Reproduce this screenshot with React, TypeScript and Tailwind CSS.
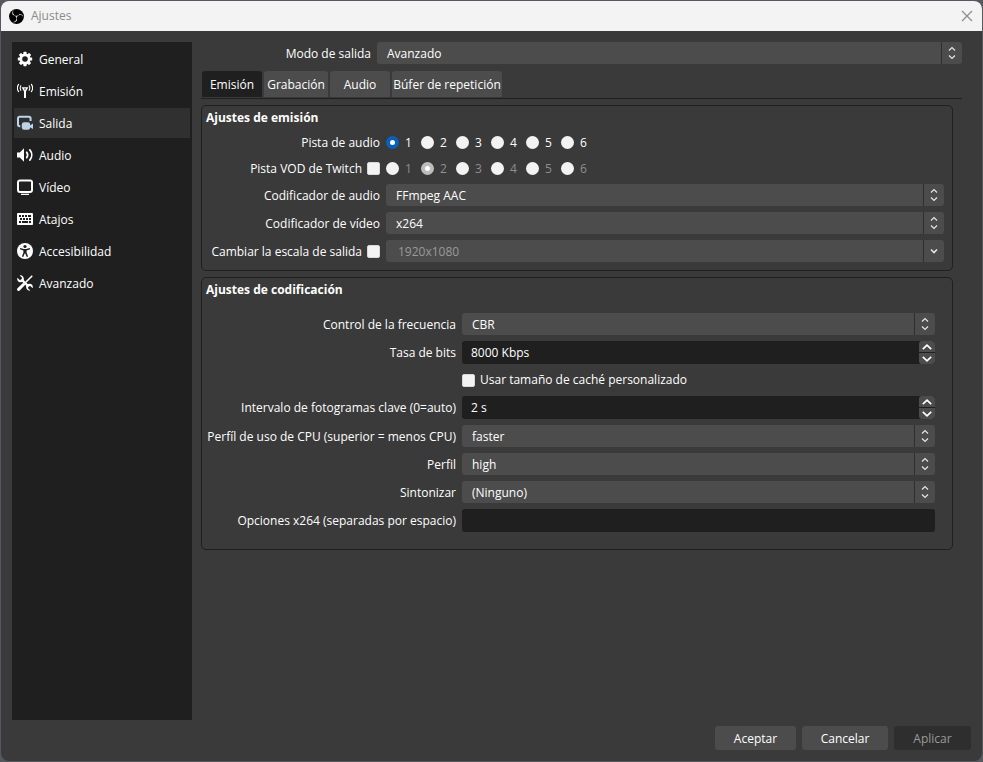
import { useId, useState } from "react";
import type { ReactNode } from "react";
import { SiObsstudio } from "react-icons/si";

const sections = [
  "General",
  "Emisión",
  "Salida",
  "Audio",
  "Vídeo",
  "Atajos",
  "Accesibilidad",
  "Avanzado",
];

const tabs = [
  { name: "Emisión", width: "w-[60px]" },
  { name: "Grabación", width: "w-[64px]" },
  { name: "Audio", width: "w-[60px]" },
  { name: "Búfer de repetición", width: "w-[110px]" },
];

const tracks = [1, 2, 3, 4, 5, 6];

// the glyph's outer ring is cropped off by the round black disc
function ObsLogo() {
  return (
    <span className="flex h-[15px] w-[15px] shrink-0 items-center justify-center overflow-hidden rounded-full bg-black">
      <SiObsstudio className="h-[17px] w-[17px] shrink-0 text-[#e2e2e2]" aria-hidden="true" />
    </span>
  );
}

function SectionIcon({ name }: { name: string }) {
  return (
    <svg
      viewBox="0 0 16 16"
      className="h-4 w-4 shrink-0"
      fill="#fff"
      aria-hidden="true"
    >
      {name === "General" && (
        <>
          {[0, 45, 90, 135].map((angle) => (
            <rect
              key={angle}
              x="6.4"
              y="0.8"
              width="3.2"
              height="14.4"
              rx="0.6"
              transform={`rotate(${angle} 8 8)`}
            />
          ))}
          <circle cx="8" cy="8" r="5.6" />
          <circle cx="8" cy="8" r="2.8" fill="#1f1f1f" />
        </>
      )}
      {name === "Emisión" && (
        <>
          <path d="M4.600 4.200h6.800L9 8.400V15H7V8.400zM7 5.600l1 1.700 1-1.700z" fillRule="evenodd" />
          <g fill="none" stroke="#fff" strokeWidth="1.100" strokeLinecap="round">
            <path d="M1.600 1.400c-1.500 2.200-1.500 5 0 7.200" />
            <path d="M3.800 2.800C2.900 4.200 2.900 5.900 3.800 7.300" />
            <path d="M14.400 1.400c1.500 2.200 1.500 5 0 7.200" />
            <path d="M12.200 2.800c.9 1.400.9 3.100 0 4.500" />
          </g>
        </>
      )}
      {name === "Salida" && (
        <>
          <path
            d="M3.300 11.200H2.600A1.600 1.600 0 0 1 1 9.600V3.400A1.600 1.600 0 0 1 2.600 1.800h9.400A1.600 1.600 0 0 1 13.600 3.400V6"
            fill="none"
            stroke="#bcd3e8"
            strokeWidth="2"
          />
          <rect x="4.800" y="7.300" width="8.400" height="7.500" rx="2.400" fill="#bcd3e8" />
          <path d="M12.500 10.700 16 8.600v5.300l-3.500-2z" fill="#bcd3e8" />
        </>
      )}
      {name === "Audio" && (
        <>
          <path d="M0 5.400h2.800L7 1.300v13.400l-4.200-4.100H0z" />
          <g fill="none" stroke="#fff" strokeWidth="1.700" strokeLinecap="round">
            <path d="M9.700 5.300c1.200 1.700 1.200 3.700 0 5.400" />
            <path d="M12.800 2.900c2.600 3 2.600 7.200 0 10.200" />
          </g>
        </>
      )}
      {name === "Vídeo" && (
        <>
          <rect
            x="1"
            y="1.500"
            width="14"
            height="11.500"
            rx="2"
            fill="none"
            stroke="#fff"
            strokeWidth="2"
          />
          <rect x="4" y="14.700" width="8" height="1.300" />
        </>
      )}
      {name === "Atajos" && (
        <>
          <rect x="0" y="2" width="16" height="12" rx="0.8" />
          <g fill="#1f1f1f">
            <path d="M2 4h2v2H2zM5 4h2v2H5zM8 4h2v2H8zM11 4h3v2h-3z" />
            <path d="M3 7h2v2H3zM6 7h2v2H6zM9 7h2v2H9zM12 7h2v2h-2z" />
            <path d="M2 10h2v2H2zM5 10h6v2H5zM12 10h2v2h-2z" />
          </g>
        </>
      )}
      {name === "Accesibilidad" && (
        <>
          <circle cx="8" cy="8" r="8" />
          <g fill="#1f1f1f">
            <circle cx="8" cy="3.500" r="1.600" />
            <path d="M3.200 5.100 6.800 5.900h2.400l3.600-.8.300 1.200-3.500 1.100v2.200l1.500 4-1.300.5L8.300 10.600h-.6L6.200 14.100l-1.300-.5 1.500-4V7.400L2.900 6.300z" />
          </g>
        </>
      )}
      {name === "Avanzado" && (
        <>
          <path
            d="M4.500 4.500 11.500 11.500"
            stroke="#fff"
            strokeWidth="2.400"
          />
          <path d="M2.700.4 5 2.700 4.600 4.600 2.700 5 .4 2.700C-.2 4.700.6 6.300 2.100 6.900c1.900.8 3.900 0 4.700-1.800C7.400 2.700 5.500-.2 2.700.4z" />
          <path d="m13.300 15.600-2.300-2.300.4-1.900 1.900-.4 2.300 2.300c.6-2-.2-3.600-1.700-4.200-1.900-.8-3.900 0-4.700 1.800-.6 2.400 1.300 5.300 4.100 4.700z" />
          <path
            d="M14.800 1.200 9 7"
            stroke="#fff"
            strokeWidth="1.600"
            strokeLinecap="round"
          />
          <path d="M6.500 9.500 1.600 14.400" stroke="#fff" strokeWidth="3" strokeLinecap="round" />
        </>
      )}
    </svg>
  );
}

interface SelectProps {
  id: string;
  value: string;
  disabled?: boolean;
}

function Select({ id, value, disabled }: SelectProps) {
  return (
    <div className="relative min-w-0 flex-1">
      <select
        id={id}
        disabled={disabled}
        className={`block h-[22px] w-full appearance-none rounded-[3px] bg-[#4c4c4c] pt-px pr-6 ${
          disabled ? "pl-3 text-[#9a9a9a]" : "pl-[10px] text-white"
        }`}
      >
        <option>{value}</option>
      </select>
      <span className="pointer-events-none absolute inset-y-0 right-0 flex w-[21px] items-center justify-center border-l border-[#2f2f2f]">
        <svg
          viewBox="0 0 10 14"
          className="h-[14px] w-[10px]"
          fill="none"
          stroke="#e6e6e6"
          strokeWidth={disabled ? 1.6 : 1.2}
          aria-hidden="true"
        >
          {disabled ? (
            <path d="m2 5.500 3 3 3-3" />
          ) : (
            <path d="m2 4.500 3-3 3 3M2 9.500l3 3 3-3" />
          )}
        </svg>
      </span>
    </div>
  );
}

function SpinBox({ id, value }: { id: string; value: string }) {
  return (
    <div className="flex h-[23px] min-w-0 flex-1 overflow-hidden rounded-[3px] bg-[#1f1f1f]">
      <input
        id={id}
        defaultValue={value}
        className="min-w-0 flex-1 bg-transparent pl-[9px] text-white outline-none"
      />
      <div className="flex w-4 flex-col gap-px">
        <button
          type="button"
          aria-label="Aumentar"
          className="flex flex-1 items-center justify-center rounded-t-[3px] bg-[#4c4c4c]"
        >
          <svg viewBox="0 0 10 6" className="h-[6px] w-[10px]" fill="none" stroke="#fff" strokeWidth="1.700">
            <path d="m.8 5.200 4.200-4 4.200 4" />
          </svg>
        </button>
        <button
          type="button"
          aria-label="Disminuir"
          className="flex flex-1 items-center justify-center rounded-b-[3px] bg-[#4c4c4c]"
        >
          <svg viewBox="0 0 10 6" className="h-[6px] w-[10px]" fill="none" stroke="#fff" strokeWidth="1.700">
            <path d="m.8.8 4.200 4 4.200-4" />
          </svg>
        </button>
      </div>
    </div>
  );
}

const checkboxClass =
  "block h-[13px] w-[13px] shrink-0 appearance-none rounded-[2px] border border-[#d8d8d8] bg-[#f3f3f3] checked:bg-[#0a5fb8]";

interface TrackRadiosProps {
  name: string;
  selected: number;
  disabled?: boolean;
}

function TrackRadios({ name, selected, disabled }: TrackRadiosProps) {
  return (
    <div className="flex" role="radiogroup" aria-label={name}>
      {tracks.map((track) => (
        <label
          key={track}
          className={`flex w-[35px] items-center gap-[6px] ${disabled ? "text-[#8f8f8f]" : ""}`}
        >
          <input
            type="radio"
            name={name}
            defaultChecked={track === selected}
            disabled={disabled}
            className="h-[13px] w-[13px] appearance-none rounded-full bg-[#f3f3f3] checked:border-4 checked:border-[#0a5fb8] checked:bg-white disabled:checked:border-[#bdbdbd]"
          />
          {track}
        </label>
      ))}
    </div>
  );
}

interface RowProps {
  label?: string;
  htmlFor?: string;
  labelWidth: string;
  checkbox?: boolean;
  children: ReactNode;
}

function Row({ label, htmlFor, labelWidth, checkbox, children }: RowProps) {
  const checkId = useId();
  return (
    <div className="flex items-center gap-[6px]">
      <div
        className={`flex shrink-0 items-center justify-end gap-[5px] whitespace-nowrap ${labelWidth}`}
      >
        {label && (
          <label htmlFor={checkbox ? checkId : htmlFor} className="pt-px">
            {label}
          </label>
        )}
        {checkbox && <input id={checkId} type="checkbox" className={checkboxClass} />}
      </div>
      {children}
    </div>
  );
}

const streamLabel = "w-[178px]";
const encoderLabel = "w-[254px]";

export default function App() {
  const [section, setSection] = useState("Salida");
  const [tab, setTab] = useState("Emisión");

  return (
    <div className="flex min-h-screen bg-[#55585c] p-px font-[family-name:'Open_Sans',sans-serif] text-[12px] leading-4 text-white">
      <div className="flex min-w-0 flex-1 flex-col overflow-hidden rounded-lg bg-[#3a3a3a]">
        <header className="flex h-[30px] items-center gap-[7px] bg-[#f3f3f3] pr-[9px] pl-2 text-[#8b8b8b]">
          <ObsLogo />
          <h1 className="flex-1">Ajustes</h1>
          <button type="button" aria-label="Cerrar">
            <svg viewBox="0 0 12 12" className="h-3 w-3" stroke="#8b8b8b" strokeWidth="1.200">
              <path d="m1 1 10 10M11 1 1 11" />
            </svg>
          </button>
        </header>

        <div className="flex flex-1 flex-col gap-[6px] p-[11px]">
          <div className="flex flex-1 gap-[9px]">
            <nav className="flex w-[180px] shrink-0 flex-col gap-[2px] bg-[#1f1f1f] p-[2px]">
              {sections.map((name) => (
                <button
                  type="button"
                  key={name}
                  onClick={() => setSection(name)}
                  className={`flex h-[30px] items-center gap-[6px] pl-[3px] text-left ${
                    section === name ? "bg-[#303030]" : ""
                  }`}
                >
                  <SectionIcon name={name} />
                  <span className="pt-[2px]">{name}</span>
                </button>
              ))}
            </nav>

            <main className="flex min-w-0 flex-1 flex-col pr-[9px]">
              <div className="pl-px">
                <Row label="Modo de salida" htmlFor="mode" labelWidth="w-[169px]">
                  <Select id="mode" value="Avanzado" />
                </Row>
              </div>

              <div
                role="tablist"
                className="mt-[7px] flex gap-[2px] border-b border-[#1f1f1f] pb-px pl-px"
              >
                {tabs.map(({ name, width }) => (
                  <button
                    type="button"
                    role="tab"
                    key={name}
                    aria-selected={tab === name}
                    onClick={() => setTab(name)}
                    className={`h-[26px] rounded-t-[3px] pt-px whitespace-nowrap ${width} ${
                      tab === name ? "bg-[#1f1f1f]" : "bg-[#4c4c4c]"
                    }`}
                  >
                    {name}
                  </button>
                ))}
              </div>

              <section className="mt-[6px] mr-[9px] rounded-[5px] border border-[#1f1f1f] pt-1 pr-2 pb-2">
                <h2 className="pl-1 font-bold">Ajustes de emisión</h2>
                <div className="mt-2 flex flex-col gap-[6px]">
                  <Row label="Pista de audio" labelWidth={streamLabel}>
                    <TrackRadios name="Pista de audio" selected={1} />
                  </Row>
                  <div className="pt-[3px] pb-px">
                    <Row label="Pista VOD de Twitch" labelWidth={streamLabel} checkbox>
                      <TrackRadios name="Pista VOD de Twitch" selected={2} disabled />
                    </Row>
                  </div>
                  <Row label="Codificador de audio" htmlFor="aenc" labelWidth={streamLabel}>
                    <Select id="aenc" value="FFmpeg AAC" />
                  </Row>
                  <Row label="Codificador de vídeo" htmlFor="venc" labelWidth={streamLabel}>
                    <Select id="venc" value="x264" />
                  </Row>
                  <Row label="Cambiar la escala de salida" labelWidth={streamLabel} checkbox>
                    <Select id="scale" value="1920x1080" disabled />
                  </Row>
                </div>
              </section>

              <section className="mt-[6px] mr-[9px] rounded-[5px] border border-[#1f1f1f] pt-1 pr-[17px] pb-[17px]">
                <h2 className="pl-1 font-bold">Ajustes de codificación</h2>
                <div className="mt-[15px] flex flex-col gap-[6px]">
                  <Row label="Control de la frecuencia" htmlFor="rate" labelWidth={encoderLabel}>
                    <Select id="rate" value="CBR" />
                  </Row>
                  <Row label="Tasa de bits" htmlFor="bitrate" labelWidth={encoderLabel}>
                    <SpinBox id="bitrate" value="8000 Kbps" />
                  </Row>
                  <div className="py-[2px]">
                    <Row labelWidth={encoderLabel}>
                      <label className="flex items-center gap-[5px]">
                        <input type="checkbox" className={checkboxClass} />
                        Usar tamaño de caché personalizado
                      </label>
                    </Row>
                  </div>
                  <Row
                    label="Intervalo de fotogramas clave (0=auto)"
                    htmlFor="keyint"
                    labelWidth={encoderLabel}
                  >
                    <SpinBox id="keyint" value="2 s" />
                  </Row>
                  <Row
                    label="Perfíl de uso de CPU (superior = menos CPU)"
                    htmlFor="preset"
                    labelWidth={encoderLabel}
                  >
                    <Select id="preset" value="faster" />
                  </Row>
                  <Row label="Perfil" htmlFor="profile" labelWidth={encoderLabel}>
                    <Select id="profile" value="high" />
                  </Row>
                  <Row label="Sintonizar" htmlFor="tune" labelWidth={encoderLabel}>
                    <Select id="tune" value="(Ninguno)" />
                  </Row>
                  <Row
                    label="Opciones x264 (separadas por espacio)"
                    htmlFor="opts"
                    labelWidth={encoderLabel}
                  >
                    <input
                      id="opts"
                      className="h-[23px] min-w-0 flex-1 rounded-[3px] bg-[#1f1f1f] px-2 outline-none"
                    />
                  </Row>
                </div>
              </section>
            </main>
          </div>

          <footer className="flex justify-end gap-[6px]">
            <button type="button" className="h-6 w-[81px] rounded-[3px] bg-[#4c4c4c] pt-px">
              Aceptar
            </button>
            <button type="button" className="h-6 w-[86px] rounded-[3px] bg-[#4c4c4c] pt-px">
              Cancelar
            </button>
            <button
              type="button"
              disabled
              className="h-6 w-[77px] rounded-[3px] bg-[#2e2e2e] pt-px text-[#9a9a9a]"
            >
              Aplicar
            </button>
          </footer>
        </div>
      </div>
    </div>
  );
}
